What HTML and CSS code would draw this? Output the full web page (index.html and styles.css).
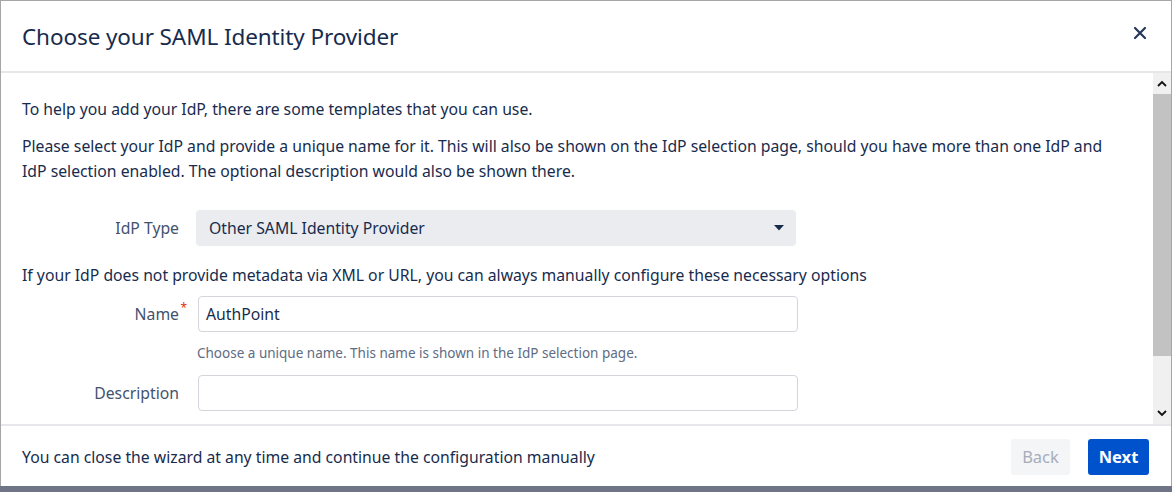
FILE: index.html
```html
<!DOCTYPE html>
<html>
<head>
<meta charset="utf-8">
<link rel="stylesheet" href="styles.css">
</head>
<body>
<div class="dialog">
  <div class="header">
    <h1 class="title">Choose your SAML Identity Provider</h1>
    <button class="close" aria-label="Close">
      <svg width="14" height="14" viewBox="0 0 14 14"><path d="M2 2 L12 12 M12 2 L2 12" stroke="#253858" stroke-width="2.2" stroke-linecap="round"/></svg>
    </button>
  </div>
  <div class="body">
    <div class="content">
      <p class="para p1">To help you add your IdP, there are some templates that you can use.</p>
      <p class="para p2">Please select your IdP and provide a unique name for it. This will also be shown on the IdP selection page, should you have more than one IdP and IdP selection enabled. The optional description would also be shown there.</p>
      <div class="row row-select">
        <label class="label">IdP Type</label>
        <div class="select">
          <span>Other SAML Identity Provider</span>
          <svg width="10" height="6" viewBox="0 0 10 6"><path d="M0 0 L10 0 L5 5.5 Z" fill="#172b4d"/></svg>
        </div>
      </div>
      <p class="para p3">If your IdP does not provide metadata via XML or URL, you can always manually configure these necessary options</p>
      <div class="row row-name">
        <label class="label">Name<span class="req">*</span></label>
        <div class="input">AuthPoint</div>
      </div>
      <div class="help">Choose a unique name. This name is shown in the IdP selection page.</div>
      <div class="row row-desc">
        <label class="label">Description</label>
        <div class="input"></div>
      </div>
    </div>
    <div class="scrollbar">
      <div class="sb-btn">
        <svg width="10" height="7" viewBox="0 0 10 7"><path d="M1 6 L5 2 L9 6" fill="none" stroke="#111" stroke-width="1.8"/></svg>
      </div>
      <div class="sb-thumb"></div>
      <div class="sb-track"></div>
      <div class="sb-btn">
        <svg width="10" height="7" viewBox="0 0 10 7"><path d="M1 1 L5 5 L9 1" fill="none" stroke="#111" stroke-width="1.8"/></svg>
      </div>
    </div>
  </div>
  <div class="footer">
    <span class="foot-text">You can close the wizard at any time and continue the configuration manually</span>
    <div class="buttons">
      <button class="btn btn-back">Back</button>
      <button class="btn btn-next">Next</button>
    </div>
  </div>
</div>
<div class="backdrop"></div>
</body>
</html>
```
FILE: styles.css
```css
html, body {
  margin: 0;
  padding: 0;
}
body {
  width: 1172px;
  height: 492px;
  overflow: hidden;
  background: #6f7586;
  font-family: "Noto Sans", "Open Sans", sans-serif;
  color: #172b4d;
}
.dialog {
  box-sizing: border-box;
  width: 1172px;
  height: 486px;
  background: #fff;
  border: 1px solid #a6a6a6;
  border-bottom: none;
  display: flex;
  flex-direction: column;
}
.header {
  height: 70px;
  flex: none;
  display: flex;
  align-items: center;
  justify-content: space-between;
  padding: 0 24px 0 21px;
  border-bottom: 2px solid #e6e7ea;
}
.title {
  margin: 0;
  font-size: 22.5px;
  font-weight: 400;
  color: #172b4d;
  letter-spacing: -0.1px;
}
.close {
  border: none;
  background: none;
  padding: 0;
  display: flex;
  margin-top: -6px;
}
.body {
  flex: 1;
  display: flex;
  min-height: 0;
  border-bottom: 2px solid #e6e7ea;
}
.content {
  flex: 1;
  padding: 24px 0 0 21px;
  font-size: 15.75px;
  line-height: 25px;
}
.para {
  margin: 0;
}
.para.p1 { margin-bottom: 12px; }
.para.p2 { padding-right: 40px; }
.row {
  display: flex;
  align-items: center;
}
.label {
  width: 157px;
  text-align: right;
  flex: none;
  color: #42526e;
  position: relative;
}
.req {
  color: #de350b;
  font-size: 12px;
  position: absolute;
  right: -8px;
  top: -7px;
}
.row-select { margin-top: 26px; }
.select {
  margin-left: 17px;
  width: 600px;
  height: 36px;
  box-sizing: border-box;
  background: #ebecf0;
  border-radius: 4px;
  display: flex;
  align-items: center;
  justify-content: space-between;
  padding: 0 12px 0 13px;
  color: #172b4d;
}
.para.p3 { margin-top: 17px; }
.row-name { margin-top: 8px; }
.input {
  margin-left: 19px;
  width: 600px;
  height: 36px;
  box-sizing: border-box;
  border: 1.5px solid #d3d5da;
  border-radius: 4px;
  padding: 0 7px;
  display: flex;
  align-items: center;
  color: #172b4d;
}
.help {
  margin: 12px 0 0 175px;
  font-size: 13.5px;
  line-height: 18px;
  color: #5e6c84;
}
.row-desc { margin-top: 13px; }
.scrollbar {
  width: 18px;
  flex: none;
  background: #f0f0f0;
  display: flex;
  flex-direction: column;
}
.sb-btn {
  height: 21px;
  display: flex;
  align-items: center;
  justify-content: center;
  flex: none;
}
.sb-thumb {
  height: 262px;
  background: #c2c2c2;
  flex: none;
}
.sb-track { flex: 1; }
.footer {
  height: 60px;
  flex: none;
  box-sizing: border-box;
  display: flex;
  align-items: center;
  justify-content: space-between;
  padding: 1px 22px 0 21px;
  font-size: 15.75px;
}
.buttons {
  display: flex;
  gap: 18px;
}
.btn {
  height: 36px;
  border: none;
  border-radius: 3px;
  font-family: "Noto Sans", "Open Sans", sans-serif;
  font-size: 16.5px;
  padding: 0;
}
.btn-back {
  background: #f4f5f7;
  color: #a5adba;
  width: 59px;
}
.btn-next {
  background: #0052cc;
  color: #fff;
  font-weight: 700;
  width: 61px;
}
.backdrop {
  height: 6px;
  background: #6f7586;
}
```
